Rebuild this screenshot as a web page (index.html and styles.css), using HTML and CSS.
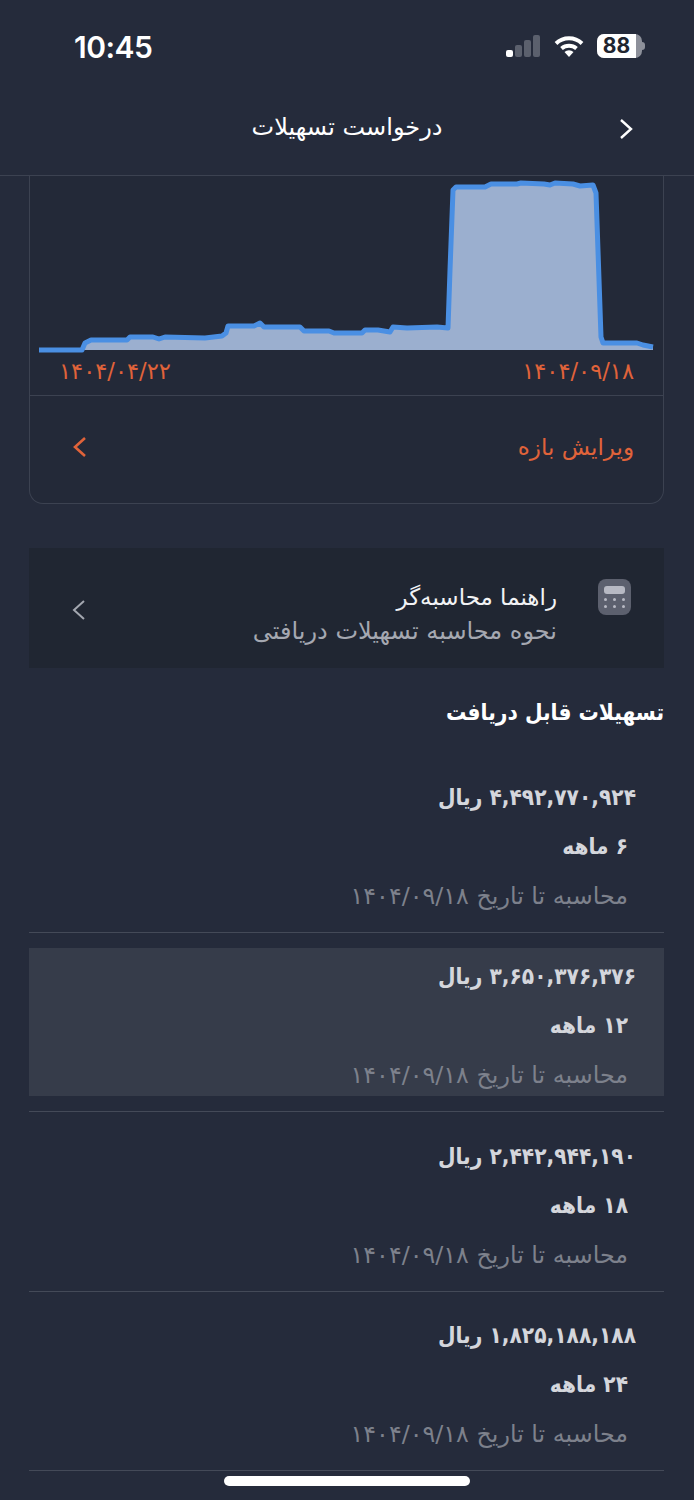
FILE: index.html
```html
<!DOCTYPE html>
<html lang="fa" dir="rtl">
<head>
  <meta charset="UTF-8">
  <meta name="viewport" content="width=device-width, initial-scale=1.0">
  <title>درخواست تسهیلات</title>
  <link rel="stylesheet" href="styles.css">
</head>
<body>
  <div class="screen">
    <div class="status-bar" dir="ltr">
      <span class="time">10:45</span>
      <div class="status-icons">
        <svg class="signal" width="34" height="22" viewBox="0 0 34 22">
          <rect x="0" y="15" width="7" height="7" rx="2" fill="#fff"/>
          <rect x="9" y="10" width="7" height="12" rx="2" fill="#5b606d"/>
          <rect x="18" y="5" width="7" height="17" rx="2" fill="#5b606d"/>
          <rect x="27" y="0" width="7" height="22" rx="2" fill="#5b606d"/>
        </svg>
        <svg class="wifi" width="30" height="22" viewBox="0 0 30 22">
          <path d="M2 8.5 A19 19 0 0 1 28 8.5" fill="none" stroke="#fff" stroke-width="4"/>
          <path d="M7.5 13.5 A11.5 11.5 0 0 1 22.5 13.5" fill="none" stroke="#fff" stroke-width="4"/>
          <path d="M15 22 L10.5 17 A6.5 6.5 0 0 1 19.5 17 Z" fill="#fff"/>
        </svg>
        <div class="battery">
          <div class="battery-fill"></div>
          <span class="battery-num">88</span>
          <div class="battery-nub"></div>
        </div>
      </div>
    </div>

    <header class="top-bar">
      <svg class="back" width="14" height="22" viewBox="0 0 14 22">
        <path d="M2 2 L12 11 L2 20" fill="none" stroke="#fff" stroke-width="2.4"/>
      </svg>
      <h1 class="top-title">درخواست تسهیلات</h1>
    </header>

    <main class="content">
      <section class="chart-card">
        <svg class="chart" width="633" height="180" viewBox="30 176 633 180">
          <path class="chart-area" d="M39 350 L82 350 L85 343 L91 340 L127 340 L130 337 L153 337 L159 339 L165 337 L205 338 L222 336 L226 333 L228 326 L254 326 L260 323 L264 327 L281 327 L300 327 L304 331 L329 331 L334 333 L362 333 L365 330 L378 330 L390 332 L393 327 L407 328 L437 327 L448 328 L450 270 L453 190 L456 187 L485 187 L491 184 L517 184 L521 183 L544 184 L550 185 L555 183 L573 184 L580 186 L593 185 L596 193 L601 337 L603 343 L637 343 L643 345 L653 347 L653 350 Z"/>
          <path class="chart-line" d="M39 350 L82 350 L85 343 L91 340 L127 340 L130 337 L153 337 L159 339 L165 337 L205 338 L222 336 L226 333 L228 326 L254 326 L260 323 L264 327 L281 327 L300 327 L304 331 L329 331 L334 333 L362 333 L365 330 L378 330 L390 332 L393 327 L407 328 L437 327 L448 328 L450 270 L453 190 L456 187 L485 187 L491 184 L517 184 L521 183 L544 184 L550 185 L555 183 L573 184 L580 186 L593 185 L596 193 L601 337 L603 343 L637 343 L643 345 L653 347"/>
        </svg>
        <div class="chart-dates">
          <span>۱۴۰۴/۰۹/۱۸</span>
          <span>۱۴۰۴/۰۴/۲۲</span>
        </div>
        <div class="edit-row">
          <span>ویرایش بازه</span>
          <svg width="14" height="22" viewBox="0 0 14 22">
            <path d="M12 2 L2 11 L12 20" fill="none" stroke="#e0633a" stroke-width="2.6"/>
          </svg>
        </div>
      </section>

      <section class="guide">
        <div class="calc-icon">
          <div class="calc-screen"></div>
          <div class="calc-keys">
            <i></i><i></i><i></i><i></i><i></i><i></i>
          </div>
        </div>
        <div class="guide-text">
          <div class="guide-title">راهنما محاسبه‌گر</div>
          <div class="guide-sub">نحوه محاسبه تسهیلات دریافتی</div>
        </div>
        <svg class="guide-arrow" width="14" height="22" viewBox="0 0 14 22">
          <path d="M12 2 L2 11 L12 20" fill="none" stroke="#a3a7b0" stroke-width="2"/>
        </svg>
      </section>

      <h2 class="list-title">تسهیلات قابل دریافت</h2>

      <div class="loan">
        <div class="loan-body">
          <div class="loan-amount">۴,۴۹۲,۷۷۰,۹۲۴ ریال</div>
          <div class="loan-term">۶ ماهه</div>
          <div class="loan-date">محاسبه تا تاریخ ۱۴۰۴/۰۹/۱۸</div>
        </div>
      </div>
      <div class="loan loan-active">
        <div class="loan-body">
          <div class="loan-amount">۳,۶۵۰,۳۷۶,۳۷۶ ریال</div>
          <div class="loan-term">۱۲ ماهه</div>
          <div class="loan-date">محاسبه تا تاریخ ۱۴۰۴/۰۹/۱۸</div>
        </div>
      </div>
      <div class="loan">
        <div class="loan-body">
          <div class="loan-amount">۲,۴۴۲,۹۴۴,۱۹۰ ریال</div>
          <div class="loan-term">۱۸ ماهه</div>
          <div class="loan-date">محاسبه تا تاریخ ۱۴۰۴/۰۹/۱۸</div>
        </div>
      </div>
      <div class="loan">
        <div class="loan-body">
          <div class="loan-amount">۱,۸۲۵,۱۸۸,۱۸۸ ریال</div>
          <div class="loan-term">۲۴ ماهه</div>
          <div class="loan-date">محاسبه تا تاریخ ۱۴۰۴/۰۹/۱۸</div>
        </div>
      </div>
    </main>

    <div class="home-bar"></div>
  </div>
</body>
</html>
```

FILE: styles.css
```css
* {
  margin: 0; padding: 0; box-sizing: border-box;
}
html, body {
  background: #252b3b;
}
.screen {
  position: relative;
  width: 694px; height: 1500px;
  overflow: hidden;
  background: #252b3b;
  color: #fff;
  font-family: "DejaVu Sans", "Noto Sans", sans-serif;
}

/* status bar */
.status-bar {
  height: 88px;
  padding: 30px 52px 0 74px;
  display: flex;
  justify-content: space-between;
  align-items: flex-start;
}
.time {
  font-family: "Inter", sans-serif;
  font-size: 30px; font-weight: 600;
  line-height: 34px;
  letter-spacing: -0.5px;
}
.status-icons {
  display: flex;
  align-items: center;
  gap: 13px;
  margin-top: 4px;
}
.signal { margin-right: 1px; }
.battery {
  position: relative;
  width: 45px; height: 24px;
  border-radius: 7px;
  background: #8d909a;
}
.battery-fill {
  position: absolute;
  left: 0; top: 0;
  width: 39px; height: 100%;
  background: #fff;
  border-radius: 7px 0 0 7px;
}
.battery-num {
  position: absolute;
  left: 0; top: 0;
  width: 39px;
  text-align: center;
  font-family: "Inter", sans-serif;
  font-size: 21px; font-weight: 700;
  line-height: 24px;
  color: #20242f;
}
.battery-nub {
  position: absolute;
  right: -3px; top: 8px;
  width: 3px; height: 8px;
  background: #8d909a;
  border-radius: 0 3px 3px 0;
}

/* header */
.top-bar {
  height: 88px;
  position: relative;
  display: flex;
  align-items: center;
  justify-content: center;
  padding-bottom: 10px;
  border-bottom: 1px solid #3c4251;
}
.top-title {
  font-size: 24px; font-weight: 400;
  color: #fff;
}
.back {
  position: absolute;
  right: 61px; top: 30px;
}

.content {
  padding: 0 30px 0 29px;
}

/* chart card */
.chart-card {
  height: 328px;
  border: 1px solid #3c4251;
  border-top: none;
  border-radius: 0 0 14px 14px;
  background: #232938;
}
.chart {
  display: block;
}
.chart-area {
  fill: #9bafcf;
}
.chart-line {
  fill: none;
  stroke: #4a8fe3;
  stroke-width: 5;
  stroke-linejoin: round;
}
.chart-dates {
  height: 39px;
  padding: 0 29px 10px;
  display: flex;
  justify-content: space-between;
  align-items: center;
  font-size: 22.5px;
  color: #e0633a;
}
.edit-row {
  height: 108px;
  padding: 0 29px 6px 43px;
  border-top: 1px solid #3c4251;
  display: flex;
  justify-content: space-between;
  align-items: center;
  font-size: 23px;
  color: #e0633a;
}

/* guide box */
.guide {
  margin-top: 44px;
  height: 120px;
  padding: 0 33px 0 43px;
  background: #202632;
  display: flex;
  align-items: center;
  gap: 41px;
}
.calc-icon {
  align-self: flex-start;
  margin-top: 31px;
  width: 33px; height: 36px;
  padding: 7px 6px 0;
  border-radius: 8px;
  background: #5c606e;
}
.calc-screen {
  height: 8px;
  border-radius: 3px;
  background: #b7b9c3;
}
.calc-keys {
  margin-top: 4px;
  display: grid;
  grid-template-columns: repeat(3, 3px);
  justify-content: space-between;
  gap: 4px;
}
.calc-keys i {
  width: 3px; height: 3px;
  border-radius: 50%;
  background: #b7b9c3;
}
.guide-text {
  flex: 1;
  padding-top: 12px;
}
.guide-title {
  font-size: 23px;
  line-height: 34px;
  color: #f2f3f5;
}
.guide-sub {
  font-size: 24px;
  line-height: 34px;
  color: #a5a8b1;
}
.guide-arrow {
  margin-top: 4px;
}

/* the bold face runs wide, so it is narrowed from the right edge */
.list-title, .loan-amount, .loan-term {
  transform: scaleX(0.88);
  transform-origin: right center;
}
.list-title {
  margin-top: 24px;
  font-size: 23px; font-weight: 700;
  line-height: 40px;
  color: #fff;
}

/* loan rows */
.loan {
  padding-bottom: 15px;
  border-bottom: 1px solid #444a58;
  margin-bottom: 15.33px;
}
.list-title + .loan {
  margin-top: 37px;
}
.loan-active .loan-body {
  background: #363c4a;
}
.loan-body {
  height: 148px;
  padding: 0 28px;
}
.loan-amount {
  font-size: 23px; font-weight: 700;
  line-height: 56px;
  color: #d4d6dc;
}
.loan-term {
  margin-right: 8px;
  font-size: 23px; font-weight: 700;
  line-height: 42px;
  color: #d4d6dc;
}
.loan-date {
  margin-top: 8px;
  padding: 0 8px;
  font-size: 23.8px;
  line-height: 42px;
  color: #7d818c;
}

.home-bar {
  position: absolute;
  left: 224px; bottom: 14px;
  width: 246px; height: 10px;
  border-radius: 5px;
  background: #fff;
}
```
